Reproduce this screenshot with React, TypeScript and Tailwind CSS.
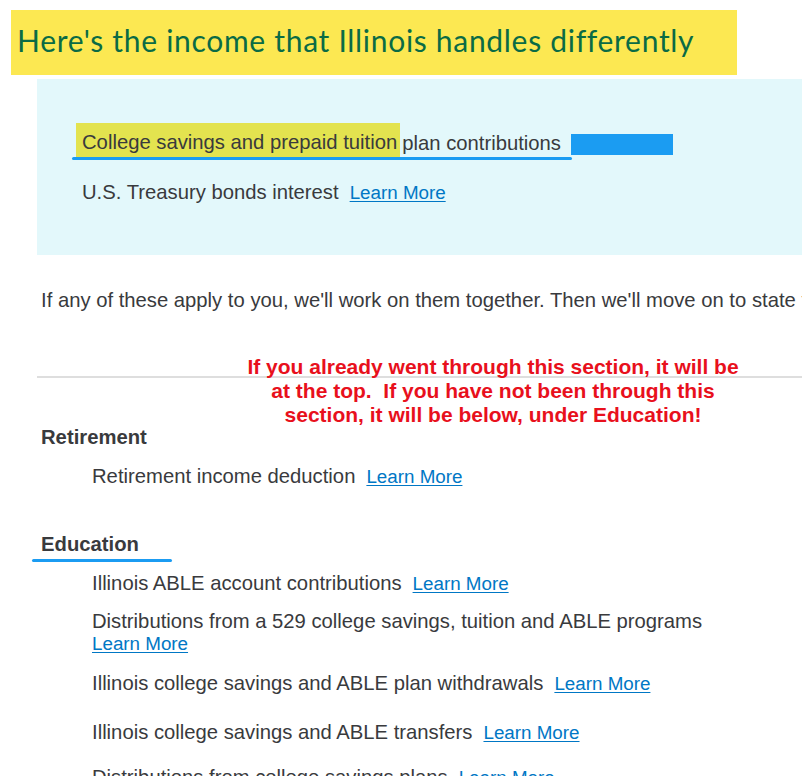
const body = "font-['Liberation_Sans',Arial,sans-serif] text-[20.25px] leading-6 text-[#393a3d]";
const link = "text-[18.8px] leading-none text-[#0077c5] underline underline-offset-2 cursor-pointer";

function LearnMore() {
  return <a className={`ml-[11px] ${link}`}>Learn More</a>;
}

function Item({ text, className = "" }: { text: string; className?: string }) {
  return (
    <div className={`pl-[92px] whitespace-nowrap ${className}`}>
      {text}
      <LearnMore />
    </div>
  );
}

export default function App() {
  return (
    <div className={`relative w-[802px] h-[776px] overflow-hidden bg-white ${body}`}>
      <div className="mt-[10px] ml-[11px] w-[726px] h-[65px] bg-[#fce852] flex items-center pl-[6px] pb-[5px]">
        <h1 className="font-['Lato',sans-serif] text-[30px] tracking-[0.7px] text-[#0a6b45] whitespace-nowrap">
          Here's the income that Illinois handles differently
        </h1>
      </div>

      <div className="mt-[4px] ml-[37px] h-[176px] bg-[#e3f8fb] pt-[44px] pl-[39px]">
        <div className="relative flex items-center h-[37px]">
          <span className="bg-[#e3e34f] border-b-2 border-[#23914a] pl-[6px] pr-[3px] h-[37px] flex items-center pt-[3px]">
            College savings and prepaid tuition
          </span>
          <span className="ml-[2px] pt-[3px]">plan contributions</span>
          <span className="ml-[10px] mt-[6px] w-[102px] h-[21px] bg-[#1b9cf2]" />
          <div className="absolute left-[-4px] top-[34px] w-[500px] h-[3px] bg-[#1b9cf2] rounded-full" />
        </div>
        <div className="mt-[20px] pl-[6px]">
          U.S. Treasury bonds interest
          <LearnMore />
        </div>
      </div>

      <p className="mt-[33px] ml-[41px] whitespace-nowrap">
        If any of these apply to you, we'll work on them together. Then we'll move on to state taxes.
      </p>

      <div className="mt-[64px] ml-[37px] h-[2px] bg-[#dedede]" />

      <h2 className="mt-[47px] ml-[41px] font-bold">Retirement</h2>
      <Item text="Retirement income deduction" className="mt-[15px]" />

      <div className="relative mt-[44px] ml-[41px] w-fit">
        <h2 className="font-bold">Education</h2>
        <div className="absolute left-[-9px] top-[27px] w-[140px] h-[3px] bg-[#1b9cf2] rounded-full" />
      </div>
      <Item text="Illinois ABLE account contributions" className="mt-[15px]" />
      <div className="mt-[15px] pl-[92px] leading-[22px] whitespace-nowrap">
        Distributions from a 529 college savings, tuition and ABLE programs
        <br />
        <a className={link}>Learn More</a>
      </div>
      <Item text="Illinois college savings and ABLE plan withdrawals" className="mt-[17px]" />
      <Item text="Illinois college savings and ABLE transfers" className="mt-[25px]" />
      <Item text="Distributions from college savings plans" className="mt-[21px]" />

      <div className="absolute left-[240px] top-[355px] w-[506px] text-center text-[21px] font-bold text-[#e8101c] whitespace-pre">
        {"If you already went through this section, it will be\nat the top.  If you have not been through this\nsection, it will be below, under Education!"}
      </div>
    </div>
  );
}
